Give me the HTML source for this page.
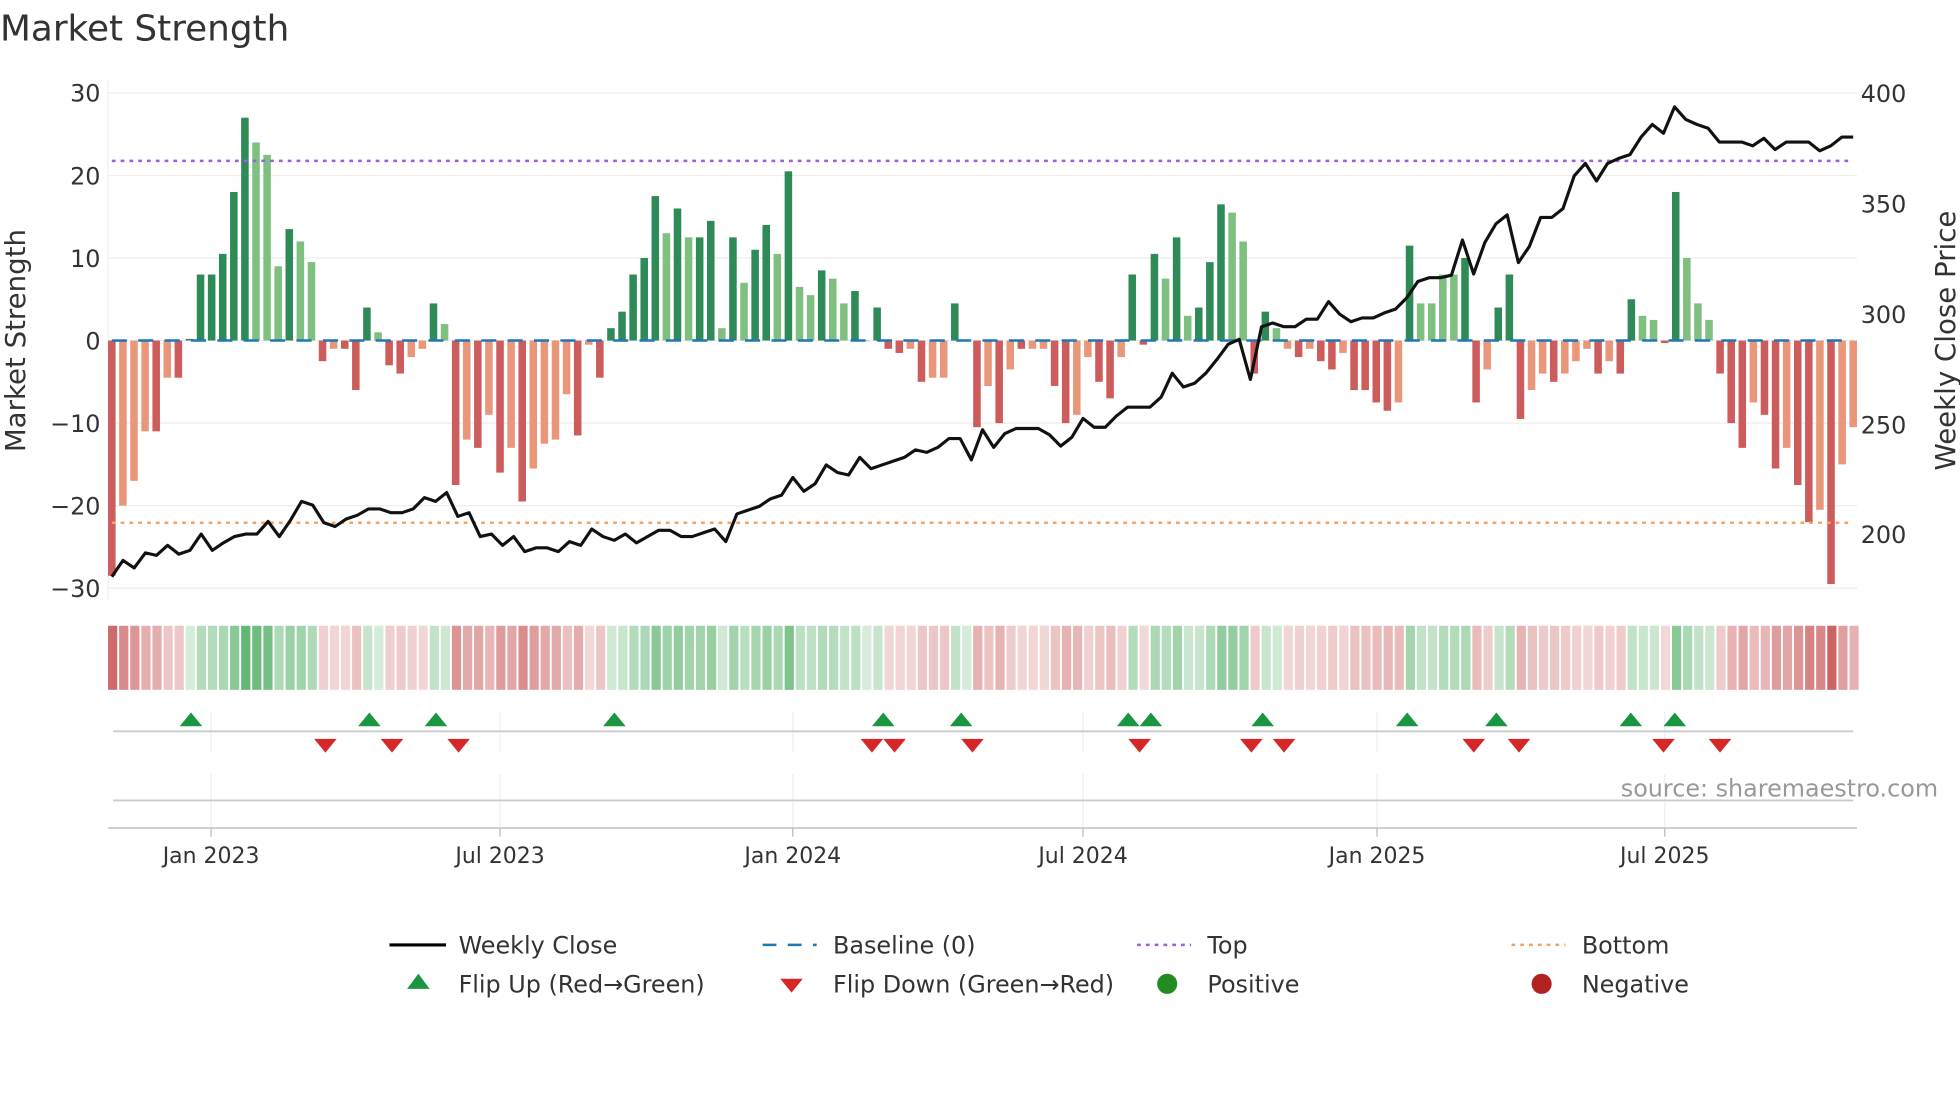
<!DOCTYPE html>
<html><head><meta charset="utf-8"><style>
html,body{margin:0;padding:0;background:#fff;overflow:hidden}
svg{display:block;font-family:"DejaVu Sans","Liberation Sans",sans-serif}
</style></head><body>
<svg id="s" width="1960" height="1102" viewBox="0 0 1560 877" xmlns="http://www.w3.org/2000/svg">
<rect width="1560" height="877" fill="#fff"/>
<text x="0" y="32" font-size="28.5" fill="#333">Market Strength</text>
<g id="grid" stroke="#eeeeee" stroke-width="1"></g>
<g id="bars"></g>
<g id="lines"></g>
<g id="heat"></g>
<g id="marks"></g>
<g id="axes" font-size="19" fill="#333"></g>
<text x="1290" y="634" font-size="19" fill="#999">source: sharemaestro.com</text>
<text transform="translate(20,271) rotate(-90)" text-anchor="middle" font-size="22" fill="#333">Market Strength</text>
<text transform="translate(1556,271) rotate(-90)" text-anchor="middle" font-size="22" fill="#333">Weekly Close Price</text>
<g font-size="19" fill="#333">
<line x1="310" y1="752" x2="355" y2="752" stroke="#000" stroke-width="2.5"/>
<text x="365" y="759">Weekly Close</text>
<line x1="607" y1="752" x2="650" y2="752" stroke="#1f77b4" stroke-width="2" stroke-dasharray="11,9"/>
<text x="663" y="759">Baseline (0)</text>
<line x1="905" y1="752" x2="948" y2="752" stroke="#9b5de5" stroke-width="2" stroke-dasharray="3,4"/>
<text x="961" y="759">Top</text>
<line x1="1203" y1="752" x2="1246" y2="752" stroke="#f4a261" stroke-width="2" stroke-dasharray="3,4"/>
<text x="1259" y="759">Bottom</text>
<path d="M324,787 L333,775 L342,787 Z" fill="#1a9641"/>
<text x="365" y="790">Flip Up (Red→Green)</text>
<path d="M621,779 L639,779 L630,790 Z" fill="#d62728"/>
<text x="663" y="790">Flip Down (Green→Red)</text>
<circle cx="929" cy="783" r="8" fill="#228b22"/>
<text x="961" y="790">Positive</text>
<circle cx="1227" cy="783" r="8" fill="#b22222"/>
<text x="1259" y="790">Negative</text>
</g>
</svg>
<script>
const NS="http://www.w3.org/2000/svg";
function el(p,t,a){const e=document.createElementNS(NS,t);for(const k in a)e.setAttribute(k,a[k]);p.appendChild(e);return e;}
const g=id=>document.getElementById(id);
const V=[[-28.5,1],[-20,0],[-17,0],[-11,0],[-11,1],[-4.5,0],[-4.5,1],[0.2,1],[8,1],[8,1],[10.5,1],[18,1],[27,1],[24,0],[22.5,0],[9,0],[13.5,1],[12,0],[9.5,0],[-2.5,1],[-1,0],[-1,1],[-6,1],[4,1],[1,0],[-3,1],[-4,1],[-2,0],[-1,0],[4.5,1],[2,0],[-17.5,1],[-12,0],[-13,1],[-9,0],[-16,1],[-13,0],[-19.5,1],[-15.5,0],[-12.5,0],[-12,0],[-6.5,0],[-11.5,1],[-0.5,0],[-4.5,1],[1.5,1],[3.5,1],[8,1],[10,1],[17.5,1],[13,0],[16,1],[12.5,0],[12.5,1],[14.5,1],[1.5,0],[12.5,1],[7,0],[11,1],[14,1],[10.5,0],[20.5,1],[6.5,0],[5.5,0],[8.5,1],[7.5,0],[4.5,0],[6,1],[0,0],[4,1],[-1,1],[-1.5,1],[-1,0],[-5,1],[-4.5,0],[-4.5,0],[4.5,1],[0,0],[-10.5,1],[-5.5,0],[-10,1],[-3.5,0],[-1,1],[-1,0],[-1,0],[-5.5,1],[-10,1],[-9,0],[-2,0],[-5,1],[-7,1],[-2,0],[8,1],[-0.5,1],[10.5,1],[7.5,0],[12.5,1],[3,0],[4,1],[9.5,1],[16.5,1],[15.5,0],[12,0],[-4,1],[3.5,1],[1.5,0],[-1,0],[-2,1],[-1,0],[-2.5,1],[-3.5,1],[-1.5,0],[-6,1],[-6,1],[-7.5,1],[-8.5,1],[-7.5,0],[11.5,1],[4.5,0],[4.5,0],[8,0],[8,0],[10,1],[-7.5,1],[-3.5,0],[4,1],[8,1],[-9.5,1],[-6,0],[-4,0],[-5,1],[-4,0],[-2.5,0],[-1,0],[-4,1],[-2.5,0],[-4,1],[5,1],[3,0],[2.5,0],[-0.3,1],[18,1],[10,0],[4.5,0],[2.5,0],[-4,1],[-10,1],[-13,1],[-7.5,0],[-9,1],[-15.5,1],[-13,0],[-17.5,1],[-22,1],[-20.5,0],[-29.5,1],[-15,0],[-10.5,0]];
const n=V.length,x0=89,x1=1475,st=(x1-x0)/(n-1);
const Y=v=>271-v*6.57;
[30,20,10,0,-10,-20,-30].forEach(v=>el(g('grid'),'line',{x1:86,x2:1478,y1:Y(v),y2:Y(v)}));
el(g('grid'),'line',{x1:86,x2:86,y1:64,y2:478});
V.forEach((d,i)=>{const x=x0+i*st,v=d[0];const c=v>=0?(d[1]?'#2e8b57':'#7fbf7f'):(d[1]?'#cd5c5c':'#e9967a');
 el(g('bars'),'rect',{x:x-3,width:6,y:Math.min(Y(v),271),height:Math.max(Math.abs(v)*6.57,0.5),fill:c});});
el(g('lines'),'line',{x1:89,x2:1475,y1:271,y2:271,stroke:'#1f77b4','stroke-width':2,'stroke-dasharray':'12,9'});
el(g('lines'),'line',{x1:89,x2:1475,y1:128,y2:128,stroke:'#9b5de5','stroke-width':2,'stroke-dasharray':'3,4'});
el(g('lines'),'line',{x1:89,x2:1475,y1:416,y2:416,stroke:'#f4a261','stroke-width':2,'stroke-dasharray':'3,4'});
const P=[459,446,452,440,442,434,441,438,425,438,432,427,425,425,415,427,414,399,402,416,419,413,410,405,405,408,408,405,396,399,392,411,408,427,425,434,427,439,436,436,439,431,434,421,427,430,425,432,427,422,422,427,427,424,421,431,409,406,403,397,394,380,391,385,370,376,378,364,373,370,367,364,358,360,356,349,349,366,342,356,345,341,341,341,346,355,348,333,340,340,331,324,324,324,316,297,308,305,297,286,274,270,302,260,257,260,260,254,254,240,250,256,253,253,249,246,237,224,221,221,219,191,218,193,178,171,209,196,173,173,166,140,130,144,130,126,123,109,99,106,85,95,99,102,113,113,113,116,110,119,113,113,113,120,116,109,109];
const m=P.length,ps=(x1-x0)/(m-1);
el(g('lines'),'polyline',{points:P.map((y,i)=>(x0+i*ps).toFixed(1)+','+y).join(' '),fill:'none',stroke:'#111','stroke-width':2.5,'stroke-linejoin':'round'});
V.forEach((d,i)=>{const x=x0-3+i*st,v=d[0],a=Math.min(1,0.22+Math.abs(v)/30*0.7);
 const c=v>=0?'rgba(70,170,90,'+a.toFixed(2)+')':'rgba(200,85,85,'+a.toFixed(2)+')';
 el(g('heat'),'rect',{x:x,y:498,width:st-1.5,height:51,fill:c});});
const ticks=[[168,'Jan 2023'],[398,'Jul 2023'],[631,'Jan 2024'],[862,'Jul 2024'],[1096,'Jan 2025'],[1325,'Jul 2025']];
ticks.forEach(t=>{el(g('marks'),'line',{x1:t[0],x2:t[0],y1:566,y2:598,stroke:'#eee'});el(g('marks'),'line',{x1:t[0],x2:t[0],y1:616,y2:659,stroke:'#eee'});});
el(g('marks'),'line',{x1:90,x2:1475,y1:582,y2:582,stroke:'#ccc','stroke-width':1.5});
el(g('marks'),'line',{x1:90,x2:1475,y1:637,y2:637,stroke:'#ccc','stroke-width':1.5});
el(g('marks'),'line',{x1:86,x2:1478,y1:659,y2:659,stroke:'#ccc','stroke-width':1.5});
[152,294,347,489,703,765,898,916,1005,1120,1191,1298,1333].forEach(x=>el(g('marks'),'path',{d:`M${x-9},578 L${x},567 L${x+9},578 Z`,fill:'#1a9641'}));
[259,312,365,694,712,774,907,996,1022,1173,1209,1324,1369].forEach(x=>el(g('marks'),'path',{d:`M${x-9},588 L${x+9},588 L${x},599 Z`,fill:'#d62728'}));
const A=g('axes');
[[30,'30'],[20,'20'],[10,'10'],[0,'0'],[-10,'−10'],[-20,'−20'],[-30,'−30']].forEach(t=>{const e=el(A,'text',{x:80,y:Y(t[0])+7,'text-anchor':'end'});e.textContent=t[1];});
[[400,74],[350,162],[300,250],[250,338],[200,425]].forEach(t=>{const e=el(A,'text',{x:1481,y:t[1]+7});e.textContent=t[0];});
ticks.forEach(t=>{el(A,'line',{x1:t[0],x2:t[0],y1:659,y2:666,stroke:'#bbb'});const e=el(A,'text',{x:t[0],y:687,'text-anchor':'middle','font-size':17.5});e.textContent=t[1];});
</script>
</body></html>
